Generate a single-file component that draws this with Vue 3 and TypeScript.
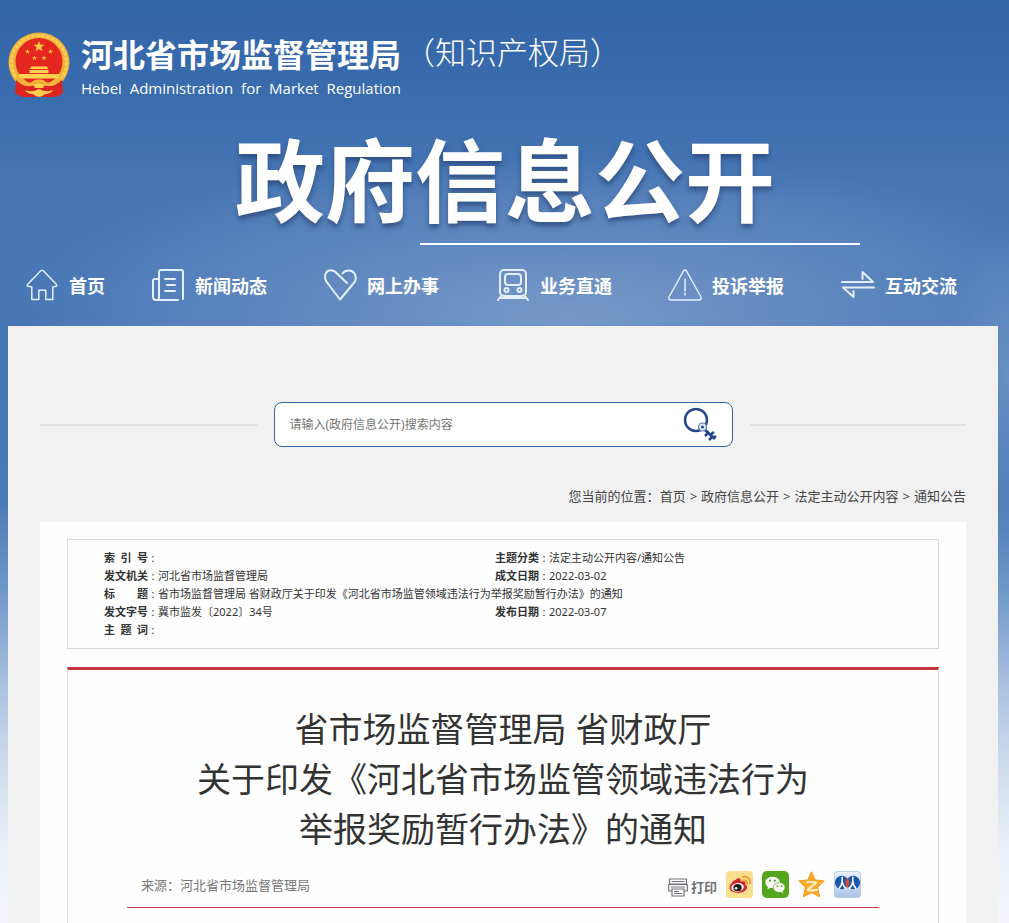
<script setup lang="ts">
interface NavItem {
  label: string
  icon: string
}

interface Field {
  label: string
  value: string
}

interface MetaRow {
  left: Field
  right?: Field
}

const orgEnglish = 'Hebei  Administration  for  Market  Regulation'

const navItems: NavItem[] = [
  { label: '首页', icon: 'home' },
  { label: '新闻动态', icon: 'news' },
  { label: '网上办事', icon: 'heart' },
  { label: '业务直通', icon: 'train' },
  { label: '投诉举报', icon: 'warn' },
  { label: '互动交流', icon: 'swap' },
]

const crumbs: string[] = ['首页', '政府信息公开', '法定主动公开内容', '通知公告']

const metaRows: MetaRow[] = [
  { left: { label: '索 引 号', value: '' }, right: { label: '主题分类', value: '法定主动公开内容/通知公告' } },
  { left: { label: '发文机关', value: '河北省市场监督管理局' }, right: { label: '成文日期', value: '2022-03-02' } },
  { left: { label: '标 题', value: '省市场监督管理局 省财政厅关于印发《河北省市场监管领域违法行为举报奖励暂行办法》的通知' } },
  { left: { label: '发文字号', value: '冀市监发〔2022〕34号' }, right: { label: '发布日期', value: '2022-03-07' } },
  { left: { label: '主 题 词', value: '' } },
]

const titleLines: string[] = [
  '省市场监督管理局 省财政厅',
  '关于印发《河北省市场监管领域违法行为',
  '举报奖励暂行办法》的通知',
]
</script>

<template>
  <div class="page">
    <header class="brand">
      <svg class="emblem" viewBox="0 0 62 66" aria-hidden="true">
        <path d="M9 47L8 62l7 3h32l7-3-1-15z" fill="#d3201f" />
        <ellipse cx="31" cy="30.500" rx="30.500" ry="30" fill="#efb137" />
        <ellipse cx="31" cy="30.500" rx="27.500" ry="27" fill="none" stroke="#f9cf58" stroke-width="3" stroke-dasharray="4 1" />
        <circle cx="31" cy="29.500" r="23.500" fill="#e5281f" />
        <path d="M31 9l1.400 3.800h4l-3.200 2.500 1.200 4-3.400-2.400-3.400 2.400 1.200-4-3.200-2.500h4z" fill="#fbd14b" />
        <path d="M19.500 17l.7 1.700h1.800l-1.500 1.200.6 1.800-1.600-1.100-1.600 1.100.6-1.800-1.500-1.200h1.800zM42.500 17l.7 1.700h1.800l-1.500 1.200.6 1.800-1.600-1.100-1.600 1.100.6-1.800-1.500-1.200h1.800zM26.500 23.500l.7 1.700H29l-1.500 1.200.6 1.800-1.600-1.100-1.600 1.100.6-1.800-1.500-1.200h1.800zM36 23.500l.7 1.700h1.800L37 26.400l.6 1.800-1.600-1.100-1.600 1.100.6-1.800-1.500-1.200h1.800z" fill="#fbc845" />
        <path d="M23 34.500h16l1 2.500H22zM21.500 38h19v3h-19zM11 42h40v4.500H11z" fill="#ffd34f" />
        <path d="M8 48q10 6 17 4l6 3 6-3q7 2 17-4l1 13-8 4H15l-8-4z" fill="#dc2320" />
        <path d="M9 46q7 8 15 6 3-3 7-3t7 3q8 2 15-6" fill="none" stroke="#f4b43a" stroke-width="3.500" />
        <path d="M25 53q6-4 12 0l-2 3h-8zM17 58q7 3 14-1 7 4 14 1-2 4-8 4-3 3-6 3t-6-3q-6 0-8-4z" fill="#ffd04c" />
      </svg>
      <div class="brand-text">
        <h1 class="org">河北省市场监督管理局</h1>
        <p class="org-en">{{ orgEnglish }}</p>
      </div>
      <p class="org-alt">（知识产权局）</p>
    </header>

    <h2 class="banner">政府信息公开</h2>
    <div class="banner-rule"></div>

    <nav class="nav" aria-label="主导航">
      <a v-for="item in navItems" :key="item.label" class="nav-item" href="#">
        <svg class="nav-icon" viewBox="0 0 32 32" aria-hidden="true">
          <path v-if="item.icon === 'home'" d="M15 1.500Q16 .8 17 1.500L30 15q1.500 1.600 0 2.300l-3.200.7v12.500h-7v-9.300h-7v9.300h-7V18L2 17.300Q.3 16.500 2 15z" />
          <g v-else-if="item.icon === 'news'" class="bold">
            <path d="M26 31H4q-3 0-3-3V12q0-2 2-2h4v19q0 2-2 2M7 12V3q0-2 2-2h20q2 0 2 2v27" />
            <path d="M13 10h10M15 16h8M13 22h10" />
          </g>
          <path v-else-if="item.icon === 'heart'" class="bold" d="M23 14L13 4.500C9 0 4 .5 2 4c-2 4-1 7 1.500 10L16 30.500 29 15c3-3 3.500-7 1.500-10.500-2.500-4-9-4-12 0" />
          <g v-else-if="item.icon === 'train'" class="bold">
            <rect x="3" y="1" width="26" height="26" rx="4" />
            <rect x="8" y="5" width="16" height="11" rx="3" />
            <circle cx="9.500" cy="21" r="2" />
            <circle cx="22.500" cy="21" r="2" />
            <path d="M5 26l-4 5M27 26l4 5M4 29h24" />
          </g>
          <g v-else-if="item.icon === 'warn'">
            <path d="M14.500 2q1.500-2 3 0L32 28q1 3-2 3H2q-3 0-2-3z" />
            <path d="M16 10v12M16 24v2" />
          </g>
          <path v-else class="bold" d="M0 13h31L20.500 3v7M32 18.500H1L11.500 28v-6" />
        </svg>
        <span>{{ item.label }}</span>
      </a>
    </nav>

    <main class="panel">
      <div class="search-row">
        <span class="search-line"></span>
        <form class="search" @submit.prevent>
          <input class="search-input" type="text" aria-label="搜索" placeholder="请输入(政府信息公开)搜索内容" />
          <button class="search-button" type="submit" aria-label="搜索">
            <svg viewBox="0 0 34 36" aria-hidden="true">
              <circle cx="13" cy="13" r="11" fill="none" stroke="#27458a" stroke-width="2.500" />
              <path d="M21 22L32 32" fill="none" stroke="#27458a" stroke-width="3" />
              <path d="M26 25l-4 4M30 29l-4 4M27 28l4-3M30 31l3-2" fill="none" stroke="#27458a" stroke-width="2.500" />
              <circle cx="19.500" cy="20" r="4" fill="#dce6f4" stroke="#5c7cae" stroke-width="1.200" />
              <circle cx="19.500" cy="20" r="1.500" fill="#27458a" />
            </svg>
          </button>
        </form>
        <span class="search-line"></span>
      </div>

      <nav class="crumbs" aria-label="当前位置">
        <span>您当前的位置：</span>
        <template v-for="(crumb, i) in crumbs" :key="crumb">
          <span v-if="i > 0" class="crumb-sep">&gt;</span>
          <a href="#">{{ crumb }}</a>
        </template>
      </nav>

      <section class="sheet">
        <div class="meta">
          <table class="meta-table">
            <colgroup>
              <col class="col-label" />
              <col class="col-value" />
              <col class="col-label" />
              <col />
            </colgroup>
            <tbody>
              <tr v-for="row in metaRows" :key="row.left.label">
                <th scope="row"><span class="meta-label">{{ row.left.label }}</span><span class="colon">:</span></th>
                <td :colspan="row.right ? 1 : 3">{{ row.left.value }}</td>
                <template v-if="row.right">
                  <th scope="row"><span class="meta-label">{{ row.right.label }}</span><span class="colon">:</span></th>
                  <td>{{ row.right.value }}</td>
                </template>
              </tr>
            </tbody>
          </table>
        </div>

        <article class="article">
          <h2 class="title">
            <span v-for="line in titleLines" :key="line" class="title-line">{{ line }}</span>
          </h2>
          <div class="byline">
            <span class="source">来源：河北省市场监督管理局</span>
            <div class="tools">
              <button class="print" type="button">
                <svg class="print-icon" viewBox="0 0 20 19" aria-hidden="true">
                  <path d="M1.500 1h17v5h-17zM3.500 3.500h13M.7 6.500h18.600v6.500H.7zM3 9h14" fill="none" stroke="#70727a" stroke-width="1.200" />
                  <path d="M4 11h12v7H4z" fill="#fff" stroke="#70727a" stroke-width="1.200" />
                  <path d="M6 13.500h5M6 15.500h8" fill="none" stroke="#70727a" />
                </svg>
                <span>打印</span>
              </button>
              <a class="share" href="#" aria-label="微博">
                <svg viewBox="0 0 28 28" aria-hidden="true">
                  <rect width="28" height="28" rx="4" fill="#fbdf91" />
                  <path d="M10 9c4-3 6-1 5 2 4-1 6 0 5 3 3 2 2 5-1 7-5 3-13 2-15-2C3 15 6 11 10 9z" fill="#d4232b" />
                  <ellipse cx="12" cy="17" rx="6.500" ry="4.500" fill="#fff" transform="rotate(-8 12 17)" />
                  <ellipse cx="12" cy="17.300" rx="4.300" ry="3.700" fill="#201c1c" />
                  <circle cx="10.500" cy="18" r="1.300" fill="#fff" />
                  <path d="M18 9.500q4-.5 4 4M17.500 6q7.500-1 7.500 7" fill="none" stroke="#ec9a2e" stroke-width="1.800" stroke-linecap="round" />
                </svg>
              </a>
              <a class="share" href="#" aria-label="微信">
                <svg viewBox="0 0 28 28" aria-hidden="true">
                  <rect width="28" height="28" rx="5" fill="#52a51d" />
                  <path d="M11 6c-4.500 0-7.500 2.700-7.500 6 0 2 1 3.500 2.700 4.600L5.500 19l3-1.500c4.500 1 10-1.500 10-5.700 0-3.200-3-5.800-7.500-5.800z" fill="#f6faf2" />
                  <path d="M18 12c-3.800 0-6.500 2.200-6.500 5.200 0 3.500 4 5.500 8 4.800l2.800 1.500-.7-2.300c4-2.700 2.700-9.200-3.600-9.200z" fill="#f6faf2" stroke="#52a51d" stroke-width=".7" />
                  <g fill="#52a51d">
                    <circle cx="8.300" cy="10" r="1.100" />
                    <circle cx="13.300" cy="10" r="1.100" />
                    <circle cx="16" cy="15.700" r=".9" />
                    <circle cx="20.300" cy="15.700" r=".9" />
                  </g>
                </svg>
              </a>
              <a class="share" href="#" aria-label="空间">
                <svg viewBox="0 0 28 28" aria-hidden="true">
                  <path d="M14 .8l4 8.500 9.200 1-6.800 6.500 2 10L14 22.500l-8.400 4.300 2-10-6.800-6.500 9.200-1z" fill="#f8ab24" stroke="#f39a1c" stroke-width="1" stroke-linejoin="round" />
                  <path d="M8.500 12q5-1.500 10.500 0L10 19.500q4 1.500 10.500 0" fill="none" stroke="#fff8df" stroke-width="2" stroke-linejoin="round" />
                </svg>
              </a>
              <a class="share" href="#" aria-label="人民网">
                <svg viewBox="0 0 28 28" aria-hidden="true">
                  <defs>
                    <linearGradient id="tile" x1="0" y1="0" x2="0" y2="1">
                      <stop offset="0" stop-color="#eaf1f9" />
                      <stop offset="1" stop-color="#a9c4e4" />
                    </linearGradient>
                  </defs>
                  <rect x=".5" y=".5" width="27" height="27" rx="3" fill="url(#tile)" stroke="#b5cbe4" />
                  <ellipse cx="8" cy="12" rx="7" ry="7" fill="#1a58ab" />
                  <ellipse cx="20" cy="12" rx="7" ry="7" fill="#1a58ab" />
                  <path d="M14 7q4 4.500 0 11-4-6.500 0-11z" fill="#e24832" />
                  <path d="M8.500 6v5q-.5 4-3.500 7.500M8.500 11q.5 4 4 7.500M19.500 6v5q-.5 4-4 7.500M19.500 11q.5 4 3.500 7.500" fill="none" stroke="#fff" stroke-width="1.600" />
                </svg>
              </a>
            </div>
          </div>
        </article>
      </section>
    </main>
  </div>
</template>

<style>
body {
  margin: 0;
}
</style>

<style scoped>
.page {
  box-sizing: border-box;
  min-height: 100vh;
  display: flex;
  flex-direction: column;
  padding: 0 11px 0 8px;
  font-family: "Noto Sans", "Noto Sans CJK SC", sans-serif;
  color: #333;
  background:
    radial-gradient(ellipse 560px 160px at 56% 315px, rgba(134, 163, 207, 0.75), rgba(134, 163, 207, 0) 100%),
    radial-gradient(ellipse 60px 150px at 100% 380px, rgba(116, 152, 202, 0.7), rgba(116, 152, 202, 0) 100%),
    linear-gradient(to bottom, #3265a8 0, #3a6cae 100px, #4a78b5 200px, #4776b5 330px, #4b7bb8 500px, #6f98c9 590px, #a9c0e0 684px, #cad8ea 753px, #eaf0f8 845px, #f3f5fa 923px);
}

a {
  color: inherit;
  text-decoration: none;
}

h1,
h2,
p {
  margin: 0;
}

.brand {
  display: flex;
  align-items: flex-start;
  padding: 32px 0 0;
  color: #fff;
}

.emblem {
  width: 62px;
  height: 66px;
  margin-right: 11px;
}

.org {
  font-size: 32px;
  line-height: 46px;
  font-weight: 700;
}

.org-en {
  font-family: "Open Sans", "Noto Sans", sans-serif;
  font-size: 15px;
  line-height: 20px;
  white-space: pre;
}

.org-alt {
  font-family: "Noto Sans CJK SC", sans-serif;
  font-size: 31px;
  line-height: 38px;
  font-weight: 300;
}

.banner {
  margin-top: 27px;
  padding-left: 4px;
  color: #fff;
  font-size: 90px;
  line-height: 110px;
  font-weight: 700;
  text-align: center;
  text-shadow: 0 4px 5px rgba(38, 66, 112, 0.7);
}

.banner-rule {
  height: 2px;
  margin: 8px 138px 0 412px;
  background: #fff;
}

.nav {
  display: grid;
  grid-template-columns: 126fr 172fr 173fr 172fr 173fr 156fr;
  padding: 24px 0 25px 18px;
}

.nav-item {
  display: flex;
  align-items: center;
  gap: 11px;
  height: 32px;
  color: #fff;
  font-size: 18px;
  font-weight: 700;
  white-space: nowrap;
}

.nav-icon {
  width: 32px;
  height: 32px;
  overflow: visible;
  fill: none;
  stroke: #e3effc;
  stroke-width: 1.5;
  stroke-linejoin: round;
  stroke-linecap: round;
}

.bold {
  stroke-width: 2;
}

.panel {
  flex: 1;
  display: flex;
  flex-direction: column;
  padding: 76px 32px 0;
  background: #f2f1f2;
}

.search-row {
  display: flex;
  align-items: center;
  gap: 17px;
}

.search-line {
  flex: 1;
  height: 2px;
  background: #dfdfe0;
}

.search {
  box-sizing: border-box;
  display: flex;
  align-items: center;
  width: 459px;
  height: 45px;
  padding: 0 15px;
  border: 1px solid #2e669f;
  border-radius: 8px;
  background: #fff;
}

.search-input {
  flex: 1;
  min-width: 0;
  padding: 0;
  border: 0;
  outline: 0;
  background: transparent;
  font-family: inherit;
  font-size: 12px;
  color: #333;
}

.search-input::placeholder {
  color: #757575;
  opacity: 1;
}

.search-button {
  width: 34px;
  height: 36px;
  padding: 0;
  border: 0;
  background: transparent;
}

.search-button svg {
  display: block;
}

.crumbs {
  display: flex;
  justify-content: flex-end;
  margin-top: 39px;
  font-size: 13px;
  line-height: 20px;
  color: #444;
}

.crumb-sep {
  padding: 0 4px;
}

.sheet {
  flex: 1;
  display: flex;
  flex-direction: column;
  margin-top: 16px;
  padding: 17px 27px 0;
  background: #fefefe;
}

.meta {
  padding: 9px 36px;
  border: 1px solid #d9d9d9;
}

.meta-table {
  width: 100%;
  table-layout: fixed;
  border-collapse: collapse;
  font-size: 11px;
  line-height: 18px;
  color: #333;
}

.meta-table th,
.meta-table td {
  padding: 0;
  height: 18px;
  text-align: left;
  white-space: nowrap;
}

.col-label {
  width: 54px;
}

.col-value {
  width: 337px;
}

.meta-label {
  display: inline-block;
  width: 44px;
  text-align-last: justify;
  vertical-align: top;
}

.colon {
  display: inline-block;
  width: 10px;
  font-weight: 400;
  text-align: center;
  vertical-align: top;
}

.article {
  flex: 1;
  margin-top: 18px;
  padding: 34px 59px 0;
  border: 1px solid #d9d9d9;
  border-top: 3px solid #c3363b;
  border-bottom: 0;
}

.title {
  font-size: 34px;
  line-height: 50px;
  font-weight: 400;
  text-align: center;
  color: #333;
}

.title-line {
  display: block;
}

.byline {
  display: flex;
  align-items: center;
  justify-content: space-between;
  height: 46px;
  margin-top: 7px;
  padding: 0 18px 0 14px;
  border-bottom: 1px solid #c3363b;
}

.source {
  font-size: 13px;
  color: #777;
}

.tools {
  display: flex;
  align-items: center;
  gap: 9px;
}

.print {
  display: flex;
  align-items: center;
  gap: 3px;
  padding: 6px 0 0;
  border: 0;
  background: transparent;
  font-family: inherit;
  font-size: 13px;
  line-height: 18px;
  font-weight: 700;
  color: #70727a;
}

.print-icon {
  width: 20px;
  height: 19px;
}

.share {
  width: 27px;
  height: 27px;
}

.share svg {
  display: block;
}

.org-alt {
  margin-left: 3px;
}
</style>
